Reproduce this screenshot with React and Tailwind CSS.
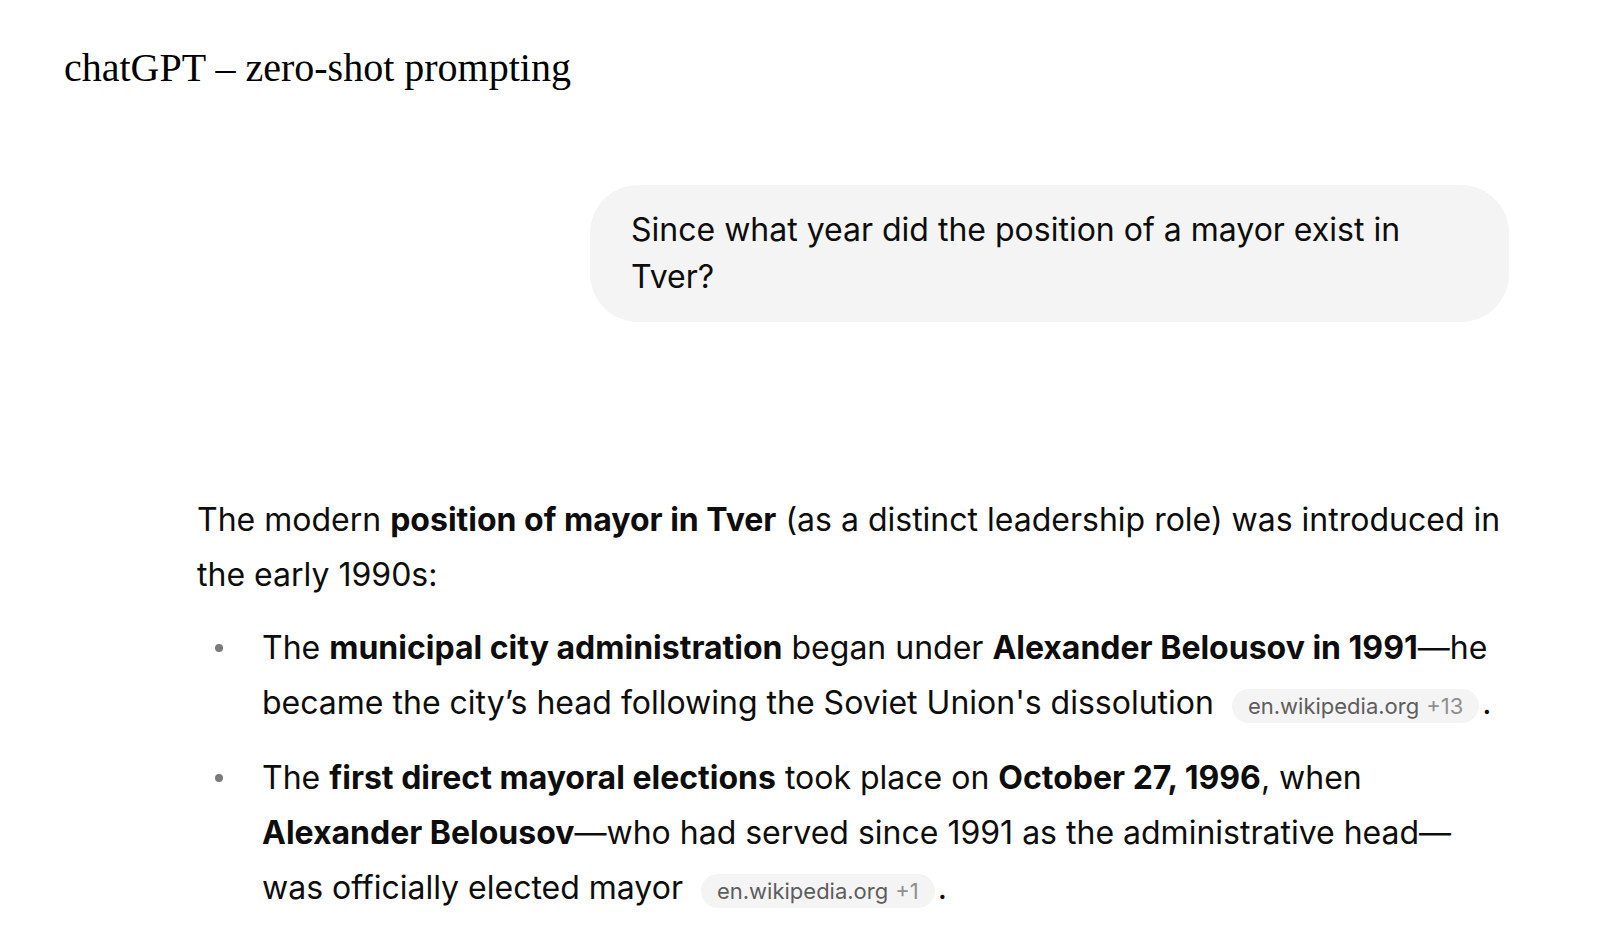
import React from "react";

function Pill({ site, more }) {
  return (
    <span className="inline-flex items-center h-[34px] ml-[18px] px-[16px] rounded-full bg-[#f4f4f4] text-[22px] leading-none align-[2px] translate-y-[2px]">
      <span className="text-[#5d5d5d]">{site}</span>
      <span className="text-[#8f8f8f] ml-[7px]">{more}</span>
    </span>
  );
}

function Bullet({ children }) {
  return (
    <li className="flex">
      <div className="w-[65px] shrink-0 flex justify-start">
        <span className="mt-[24px] ml-[18px] w-[8px] h-[8px] rounded-full bg-[#7a7a7a]" />
      </div>
      <div className="flex-1">{children}</div>
    </li>
  );
}

export default function App() {
  return (
    <div className="w-[1602px] h-[948px] bg-white overflow-hidden">
      <div className="pt-[45px] pl-[64px] text-[40px] leading-[46px] text-black font-['Liberation_Serif',serif]">
        chatGPT – zero-shot prompting
      </div>

      <div className="font-['Inter',sans-serif] text-[#0d0d0d]">
        <div className="mt-[94px] flex justify-end pr-[93px]">
          <div className="w-[919px] bg-[#f4f4f4] rounded-[48px] px-[41px] pt-[21px] pb-[22px] text-[32px] leading-[47px]">
            Since what year did the position of a mayor exist in Tver?
          </div>
        </div>

        <div className="mt-[170px] pl-[197px] pr-[93px] text-[32px] leading-[55px]">
          <p>
            The modern <strong className="font-bold">position of mayor in Tver</strong> (as a distinct leadership role) was introduced in the early 1990s:
          </p>
          <ul className="mt-[18px] flex flex-col gap-[20px]">
            <Bullet>
              The <strong className="font-bold">municipal city administration</strong> began under{" "}
              <strong className="font-bold">Alexander Belousov in 1991</strong>—he became the city’s head following the Soviet Union's dissolution
              <Pill site="en.wikipedia.org" more="+13" />
              <span className="ml-[3px]">.</span>
            </Bullet>
            <Bullet>
              The <strong className="font-bold">first direct mayoral elections</strong> took place on{" "}
              <strong className="font-bold">October 27, 1996</strong>, when{" "}
              <strong className="font-bold">Alexander Belousov</strong>—who had served since 1991 as the administrative head—was officially elected mayor
              <Pill site="en.wikipedia.org" more="+1" />
              <span className="ml-[3px]">.</span>
            </Bullet>
          </ul>
        </div>
      </div>
    </div>
  );
}
